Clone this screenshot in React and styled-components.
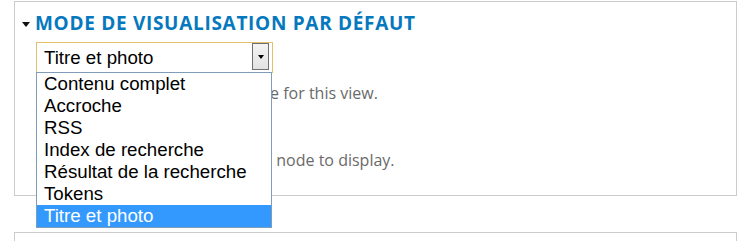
import React from 'react';
import styled, { createGlobalStyle } from 'styled-components';

const Global = createGlobalStyle`
  html, body { margin: 0; padding: 0; background: #ffffff; }
  body { font-family: "Open Sans", "DejaVu Sans", sans-serif; }
`;

const Page = styled.div`
  box-sizing: border-box;
  height: 241px;
  overflow: hidden;
  padding: 1px 8px 0 14px;
  display: flex;
  flex-direction: column;
  gap: 36px;
`;

const Fieldset = styled.section`
  box-sizing: border-box;
  flex: none;
  height: ${(p) => p.$h}px;
  border: 1px solid #cccccc;
  padding: 9px 0 0 7px;
`;

const Legend = styled.div`
  display: flex;
  align-items: center;
  gap: 5px;
  height: 24px;
`;

const Caret = styled.span`
  width: 0;
  height: 0;
  border-left: 4.5px solid transparent;
  border-right: 4.5px solid transparent;
  border-top: 5px solid #111111;
  margin-top: 2px;
`;

const LegendText = styled.h2`
  margin: 0;
  font-family: "Open Sans", sans-serif;
  font-weight: 700;
  font-size: 19px;
  line-height: 24px;
  color: #0678be;
  text-transform: uppercase;
  letter-spacing: 0.7px;
`;

const Body = styled.div`
  padding: 7px 0 0 14px;
  display: flex;
  flex-direction: column;
`;

const SelectWrap = styled.div`
  position: relative;
  width: 237px;
  z-index: 2;
`;

const SelectBox = styled.div`
  box-sizing: border-box;
  height: 31px;
  border: 1px solid #e3c16b;
  background: #ffffff;
  display: flex;
  align-items: flex-start;
  padding: 0 3px 0 7px;
`;

const SelectValue = styled.span`
  flex: 1;
  font-family: "Liberation Sans", Arial, sans-serif;
  font-size: 18.7px;
  line-height: 29px;
  color: #000000;
`;

const ArrowButton = styled.span`
  box-sizing: border-box;
  width: 17px;
  height: 27px;
  border: 1px solid #707070;
  background: linear-gradient(#f4f4f4, #e2e2e2);
  display: flex;
  align-items: center;
  justify-content: center;
  &::after {
    content: "";
    width: 0;
    height: 0;
    border-left: 3.5px solid transparent;
    border-right: 3.5px solid transparent;
    border-top: 4px solid #000000;
  }
`;

const List = styled.ul`
  position: absolute;
  left: 0;
  top: calc(100% - 1px);
  box-sizing: border-box;
  width: 236px;
  margin: 0;
  padding: 0;
  list-style: none;
  border: 1px solid #7f9db9;
  background: #ffffff;
`;

const Option = styled.li`
  height: 22px;
  padding-left: 7px;
  font-family: "Liberation Sans", Arial, sans-serif;
  font-size: 18.7px;
  line-height: 22px;
  color: ${(p) => (p.$selected ? '#ffffff' : '#000000')};
  background: ${(p) => (p.$selected ? '#3399ff' : 'transparent')};
  white-space: nowrap;
`;

const Description = styled.div`
  font-family: "Open Sans", sans-serif;
  font-size: 16px;
  line-height: 20px;
  color: #6a6a6a;
  margin-top: ${(p) => p.$mt}px;
  white-space: nowrap;
`;

const Label = styled.label`
  margin-top: 2px;
  font-family: "Open Sans", sans-serif;
  font-weight: 700;
  font-size: 14px;
  line-height: 20px;
  color: #333333;
`;

const Input = styled.div`
  box-sizing: border-box;
  width: 80px;
  height: 22px;
  border: 1px solid #cccccc;
  margin-top: 1px;
`;

const options = [
  'Contenu complet',
  'Accroche',
  'RSS',
  'Index de recherche',
  'Résultat de la recherche',
  'Tokens',
  'Titre et photo',
];

export default function App() {
  const selected = 'Titre et photo';
  return (
    <>
      <Global />
      <Page>
        <Fieldset $h={195}>
          <Legend>
            <Caret />
            <LegendText>Mode de visualisation par défaut</LegendText>
          </Legend>
          <Body>
            <SelectWrap>
              <SelectBox>
                <SelectValue>{selected}</SelectValue>
                <ArrowButton />
              </SelectBox>
              <List>
                {options.map((o) => (
                  <Option key={o} $selected={o === selected}>
                    {o}
                  </Option>
                ))}
              </List>
            </SelectWrap>
            <Description $mt={10}>Select the default tab view mode for this view.</Description>
            <Label>Nombre</Label>
            <Input />
            <Description $mt={2}>Select the content type for each node to display.</Description>
          </Body>
        </Fieldset>
        <Fieldset $h={40} />
      </Page>
    </>
  );
}
